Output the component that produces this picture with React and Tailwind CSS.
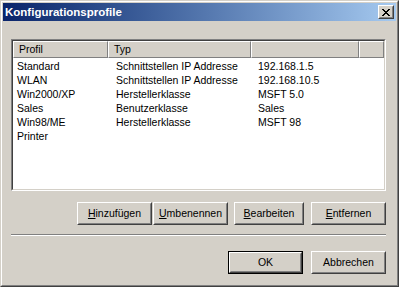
import React from "react";

function Btn({ w, children, def }) {
  const inner = (
    <div className="h-full border border-t-white border-l-white border-r-[#404040] border-b-[#404040]">
      <div className="h-full flex items-center justify-center border border-t-[#d4d0c8] border-l-[#d4d0c8] border-r-[#808080] border-b-[#808080]">
        {children}
      </div>
    </div>
  );
  if (def) {
    return <div className={`${w} h-[23px] border border-black`}>{inner}</div>;
  }
  return <div className={`${w} h-[23px]`}>{inner}</div>;
}

const rows = [
  ["Standard", "Schnittstellen IP Addresse", "192.168.1.5"],
  ["WLAN", "Schnittstellen IP Addresse", "192.168.10.5"],
  ["Win2000/XP", "Herstellerklasse", "MSFT 5.0"],
  ["Sales", "Benutzerklasse", "Sales"],
  ["Win98/ME", "Herstellerklasse", "MSFT 98"],
  ["Printer", "", ""],
];

function HeaderCell({ w, children }) {
  return (
    <div className={`${w} h-[17px] shrink-0 flex items-center border border-t-white border-l-white border-r-[#808080] border-b-[#808080] pl-[5px]`}>
      {children}
    </div>
  );
}

export default function App() {
  return (
    <div className="w-[399px] h-[287px] bg-[#d4d0c8] border border-t-[#d4d0c8] border-l-[#d4d0c8] border-r-[#404040] border-b-[#404040] font-['Liberation_Sans',Arial,sans-serif] text-[10.5px] leading-[13px] text-black">
      <div className="h-full border border-t-white border-l-white border-r-[#808080] border-b-[#808080] p-px flex flex-col">
        {/* Title bar */}
        <div className="h-[18px] shrink-0 flex items-center justify-between bg-linear-to-r from-[#0a246a] to-[#a6caf0] pl-[2px] pr-[2px]">
          <span className="text-white font-bold text-[11.5px]">Konfigurationsprofile</span>
          <div className="w-[16px] h-[14px] border border-t-white border-l-white border-r-[#404040] border-b-[#404040] bg-[#d4d0c8]">
            <div className="h-full border border-t-[#d4d0c8] border-l-[#d4d0c8] border-r-[#808080] border-b-[#808080] flex items-center justify-center">
              <svg width="8" height="7" viewBox="0 0 8 7" shapeRendering="crispEdges">
                <path d="M0 0h2v1H0zM6 0h2v1H6zM1 1h2v1H1zM5 1h2v1H5zM2 2h4v1H2zM3 3h2v1H3zM2 4h4v1H2zM1 5h2v1H1zM5 5h2v1H5zM0 6h2v1H0zM6 6h2v1H6z" fill="#000" />
              </svg>
            </div>
          </div>
        </div>

        {/* Content */}
        <div className="flex-1 flex flex-col pl-[8px] pr-[10px]">
          {/* List view */}
          <div className="mt-[18px] h-[152px] border border-t-[#808080] border-l-[#808080] border-r-white border-b-white">
            <div className="h-full border border-t-[#404040] border-l-[#404040] border-r-[#d4d0c8] border-b-[#d4d0c8] bg-white flex flex-col overflow-hidden">
              <div className="flex bg-[#d4d0c8]">
                <HeaderCell w="w-[95px]">Profil</HeaderCell>
                <HeaderCell w="w-[143px]">Typ</HeaderCell>
                <HeaderCell w="w-[108px]"></HeaderCell>
                <HeaderCell w="flex-1"></HeaderCell>
              </div>
              <div className="pt-[1px] flex flex-col">
                {rows.map((r) => (
                  <div key={r[0]} className="flex h-[14px] items-center">
                    <div className="w-[95px] shrink-0 pl-[4px] whitespace-nowrap">{r[0]}</div>
                    <div className="w-[143px] shrink-0 pl-[8px] whitespace-nowrap">{r[1]}</div>
                    <div className="w-[108px] shrink-0 pl-[7px] whitespace-nowrap">{r[2]}</div>
                  </div>
                ))}
              </div>
            </div>
          </div>

          {/* Action buttons */}
          <div className="mt-[11px] flex justify-end">
            <Btn w="w-[75px]"><span><u>H</u>inzufügen</span></Btn>
            <div className="w-[1px]" />
            <Btn w="w-[75px]"><span><u>U</u>mbenennen</span></Btn>
            <div className="w-[6px]" />
            <Btn w="w-[70px]"><span><u>B</u>earbeiten</span></Btn>
            <div className="w-[7px]" />
            <Btn w="w-[75px]"><span><u>E</u>ntfernen</span></Btn>
          </div>

          {/* Separator */}
          <div className="mt-[9px] border-t border-t-[#808080] border-b border-b-white" />

          {/* Dialog buttons */}
          <div className="mt-[15px] flex justify-end">
            <Btn w="w-[75px]" def><span>OK</span></Btn>
            <div className="w-[8px]" />
            <Btn w="w-[75px]"><span>Abbrechen</span></Btn>
          </div>
        </div>
      </div>
    </div>
  );
}
